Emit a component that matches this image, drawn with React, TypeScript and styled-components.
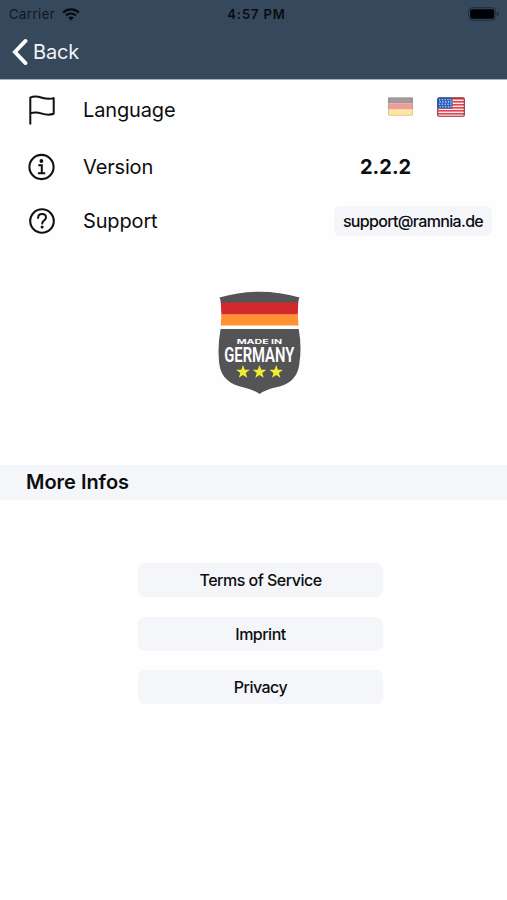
import React from "react";
import styled, { createGlobalStyle } from "styled-components";

const GlobalStyle = createGlobalStyle`
  * { box-sizing: border-box; }
  body {
    margin: 0;
    background: #fefefe;
    color: #0c0d0f;
    font-family: Inter, "Liberation Sans", sans-serif;
  }
  button { font-family: inherit; color: inherit; border: 0; padding: 0; margin: 0; }
  svg { display: block; flex: none; }
`;

const Screen = styled.div`
  width: 507px;
  height: 900px;
  overflow: hidden;
  display: flex;
  flex-direction: column;
`;

const Header = styled.header`
  height: 80px;
  background: #35485c;
  border-bottom: 1px solid #a3b4bb;
`;

const StatusBar = styled.div`
  height: 28px;
  padding: 0 7px 0 9px;
  display: grid;
  grid-template-columns: 1fr auto 1fr;
  align-items: center;
  color: #080c11;
`;

const Carrier = styled.div`
  display: flex;
  align-items: center;
  gap: 7px;
  font-size: 13px;
  letter-spacing: 0.5px;
  color: #10171f;
`;

const Clock = styled.div`
  font-size: 13px;
  font-weight: 600;
  letter-spacing: 0.9px;
  margin-left: 4px;
`;

const Battery = styled.div`
  display: flex;
  justify-content: flex-end;
`;

const BackButton = styled.button`
  display: flex;
  align-items: center;
  gap: 5px;
  height: 48px;
  padding-left: 12px;
  background: none;
  color: #f1f4f8;
  font-size: 20px;
  letter-spacing: -0.2px;
`;

const Row = styled.div<{ $height: number }>`
  height: ${(p) => p.$height}px;
  display: flex;
  align-items: center;
  padding-left: 27px;
`;

const RowIcon = styled.div`
  width: 56px;
  padding-bottom: 1px;
`;

const RowLabel = styled.div`
  flex: 1;
  font-size: 20px;
  letter-spacing: -0.15px;
`;

const Flags = styled.div`
  display: flex;
  align-items: center;
  gap: 24px;
  padding: 0 42px 7px 0;
`;

const VersionNumber = styled.div`
  width: 147px;
  font-size: 20px;
  font-weight: 700;
`;

const MailButton = styled.button`
  width: 158px;
  height: 30px;
  margin-right: 15px;
  border-radius: 7px;
  background: #f5f6fa;
  font-size: 16px;
  font-weight: 500;
  letter-spacing: -0.67px;
`;

const BadgeArea = styled.div`
  height: 217px;
  padding: 43px 0 0 218px;
`;

const SectionTitle = styled.h2`
  height: 35px;
  margin: 0;
  padding-left: 26px;
  background: #f4f6f9;
  font-size: 20px;
  font-weight: 600;
  line-height: 35px;
  letter-spacing: -0.02px;
`;

const LinkList = styled.nav`
  display: flex;
  flex-direction: column;
  gap: 19.6px;
  width: 245px;
  margin: 63px 0 0 138px;
`;

const LinkButton = styled.button`
  height: 34px;
  border-radius: 7px;
  background: #f4f6f9;
  font-size: 16px;
  font-weight: 500;
  letter-spacing: -0.5px;
`;

const WifiIcon = () => (
  <svg width="18" height="13" viewBox="0 0 18 13" fill="none" stroke="#080c11">
    <path d="M1.2 4.6C5.6.4 12.4.4 16.8 4.6" strokeWidth="2.3" />
    <path d="M4 7.5c2.9-2.7 7.1-2.7 10 0" strokeWidth="2.1" />
    <path d="M9 12.4 6.1 9.5c1.7-1.5 4.1-1.5 5.8 0z" fill="#080c11" stroke="none" />
  </svg>
);

const BatteryIcon = () => (
  <svg width="32" height="14" viewBox="0 0 32 14">
    <rect x="0.7" y="0.7" width="27" height="12.6" rx="3.4" fill="none" stroke="#202d3a" />
    <rect x="2.2" y="2.2" width="24" height="9.6" rx="2" fill="#000205" />
    <path d="M29.2 4.8c2 .7 2 3.7 0 4.4z" fill="#202d3a" />
  </svg>
);

const ChevronIcon = () => (
  <svg width="16" height="28" viewBox="0 0 16 28" fill="none" stroke="#fff" strokeWidth="3.8">
    <path d="M13.5 2.9 2.9 14l10.6 11.1" strokeLinecap="round" strokeLinejoin="miter" />
  </svg>
);

const FlagIcon = () => (
  <svg width="29" height="30" viewBox="0 0 29 30" fill="none" stroke="#111" strokeWidth="2" strokeLinecap="round" strokeLinejoin="round">
    <path d="M3.3 28.8V2.6C6.500 1 10 1.100 15 2.700c4.500 1.400 8 1.500 11.700.4v15.700c-4 1.300-7.500 1.100-11.700-.2-5-1.500-8.500-1.300-11.700-.2" />
  </svg>
);

const InfoIcon = () => (
  <svg width="29" height="28" viewBox="0 0 29 28" fill="none" stroke="#111">
    <circle cx="14.5" cy="14" r="12.1" strokeWidth="2.1" />
    <circle cx="14.4" cy="8" r="1.9" fill="#111" stroke="none" />
    <path d="M11.3 12.3h3.5v7.6M10.9 20.3h7.3" strokeWidth="2" />
  </svg>
);

const HelpIcon = () => (
  <svg width="30" height="28" viewBox="0 0 30 28" fill="none" stroke="#111">
    <circle cx="15" cy="14" r="11.8" strokeWidth="2.1" />
    <path d="M11.1 11c0-2.5 1.6-4 3.9-4s4 1.400 4 3.400c0 3-3.800 3.200-3.800 6" strokeWidth="2" strokeLinecap="round" />
    <circle cx="15.100" cy="19.900" r="1.500" fill="#111" stroke="none" />
  </svg>
);

const GermanFlag = () => (
  <svg width="25" height="19" viewBox="0 0 25 19">
    <path d="M0 .5h25v6H0z" fill="#a19c9a" />
    <path d="M0 6.5h25v6H0z" fill="#f29b9d" />
    <path d="M0 12.5h25v6H0z" fill="#fde79b" />
    <rect x=".5" y=".7" width="24" height="17.7" rx="1" fill="none" stroke="#8c6f50" strokeOpacity=".25" />
  </svg>
);

const UsFlag = () => (
  <svg width="28" height="20" viewBox="0 0 28 20">
    <rect x=".5" y=".7" width="27" height="18.6" rx="1" fill="#fbeaea" />
    {[1, 4, 7, 10, 13, 16].map((y) => (
      <rect key={y} x="1" y={y} width="26" height="1.6" fill="#e2444e" />
    ))}
    <rect x="1" y="1" width="14.5" height="10.6" fill="#2c5db4" />
    {[2.5, 4.9, 7.3, 9.7].map((y, r) =>
      [2.6, 5.4, 8.2, 11, 13.6].map((x) => (
        <circle key={`${x}-${y}`} cx={x + (r % 2 ? 0.5 : 0)} cy={y} r=".8" fill="#b9cef0" />
      ))
    )}
    <path d="M.7 11V2Q.7.9 2 .9H15" fill="none" stroke="#233f83" strokeWidth="1.1" />
    <path d="M15 .9h11q1.3 0 1.3 1.2v16q0 1.1-1.3 1.1H2q-1.3 0-1.300-1.100V11" fill="none" stroke="#8e2934" strokeWidth="1.1" />
  </svg>
);

const STAR = "M0-7 1.7-2.2 6.8-2.2 2.7.9 4.2 5.8 0 2.9-4.2 5.8-2.7.9-6.8-2.2-1.7-2.2Z";

const GermanyBadge = () => (
  <svg width="83" height="104" viewBox="0 0 83 104">
    <path d="M1.5 6.5Q41.5-5 81.5 6.5 80.300 9 80.200 12H2.800Q2.700 9 1.500 6.500Z" fill="#545456" />
    <path d="M2.800 11.500H80.200L79.800 23.800H3.400Z" fill="#d2292d" />
    <path d="M3.400 23.300H79.800L80.500 34.500H2.700Z" fill="#ff9033" />
    <path d="M2.600 38H80.700Q84 56 81.300 73C79.500 88 70 94 57 96.500Q47 99 41.500 103 36 99 26 96.500C13 94 3 87 1.300 73Q-.8 56 2.600 38Z" fill="#545456" />
    <text x="18.700" y="53.300" textLength="45.500" lengthAdjust="spacingAndGlyphs" fill="#fff" fontSize="6.400" fontWeight="700">MADE IN</text>
    <text x="6.300" y="71.200" textLength="70" lengthAdjust="spacingAndGlyphs" fill="#fff" fontFamily="Roboto, sans-serif" fontSize="20" fontWeight="600">GERMANY</text>
    {[25, 41.5, 58.2].map((x) => (
      <path key={x} d={STAR} transform={`translate(${x} 81)`} fill="#f5ec31" />
    ))}
  </svg>
);

export default function App() {
  return (
    <>
      <GlobalStyle />
      <Screen>
        <Header>
          <StatusBar>
            <Carrier>Carrier <WifiIcon /></Carrier>
            <Clock>4:57 PM</Clock>
            <Battery><BatteryIcon /></Battery>
          </StatusBar>
          <BackButton><ChevronIcon />Back</BackButton>
        </Header>
        <Row $height={60}>
          <RowIcon><FlagIcon /></RowIcon>
          <RowLabel>Language</RowLabel>
          <Flags><GermanFlag /><UsFlag /></Flags>
        </Row>
        <Row $height={54}>
          <RowIcon><InfoIcon /></RowIcon>
          <RowLabel>Version</RowLabel>
          <VersionNumber>2.2.2</VersionNumber>
        </Row>
        <Row $height={54}>
          <RowIcon><HelpIcon /></RowIcon>
          <RowLabel>Support</RowLabel>
          <MailButton>support@ramnia.de</MailButton>
        </Row>
        <BadgeArea><GermanyBadge /></BadgeArea>
        <SectionTitle>More Infos</SectionTitle>
        <LinkList>
          <LinkButton>Terms of Service</LinkButton>
          <LinkButton>Imprint</LinkButton>
          <LinkButton>Privacy</LinkButton>
        </LinkList>
      </Screen>
    </>
  );
}
